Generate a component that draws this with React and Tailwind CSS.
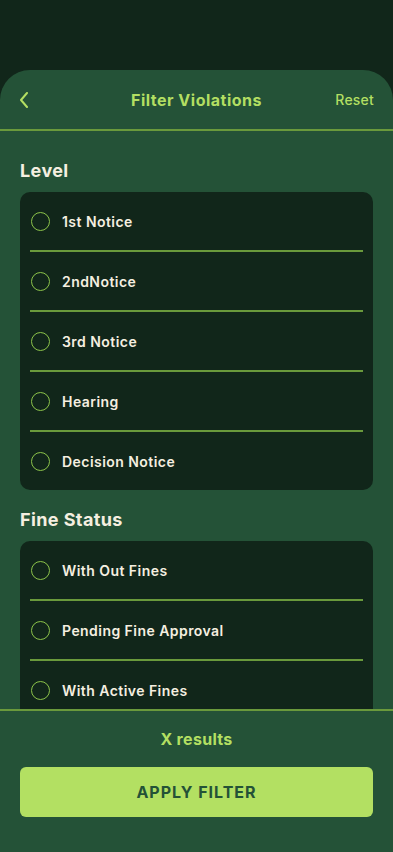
import { useState } from 'react';

const levels = ['1st Notice', '2ndNotice', '3rd Notice', 'Hearing', 'Decision Notice'];
const fineStatuses = ['With Out Fines', 'Pending Fine Approval', 'With Active Fines'];

function OptionCard({ options, selected, onToggle }) {
  return (
    <div className="rounded-[10px] bg-[#11261a]">
      {options.map((label, i) => (
        <div key={label}>
          {i > 0 && <div className="mx-[10px] h-[2px] bg-[#6a9a3c]" />}
          <button
            type="button"
            onClick={() => onToggle(label)}
            className="flex h-[58px] w-full items-center gap-[12px] px-[11px] text-left"
          >
            <span className="flex h-[19px] w-[19px] shrink-0 items-center justify-center rounded-full border border-[#8cc34a]">
              {selected.includes(label) && <span className="h-[11px] w-[11px] rounded-full bg-[#b3df62]" />}
            </span>
            <span className="text-[14px] font-semibold tracking-[0.45px] text-[#f5efe0]">{label}</span>
          </button>
        </div>
      ))}
    </div>
  );
}

export default function App() {
  const [selected, setSelected] = useState([]);

  const toggle = (label) =>
    setSelected((prev) => (prev.includes(label) ? prev.filter((l) => l !== label) : [...prev, label]));

  return (
    <div
      className="flex h-[852px] w-full flex-col overflow-hidden bg-[#11261a]"
      style={{ fontFamily: 'Inter, "Noto Sans", sans-serif' }}
    >
      <div className="h-[70px] shrink-0" />

      {/* Sheet */}
      <div className="flex min-h-0 flex-1 flex-col overflow-hidden rounded-t-[30px] bg-[#245237]">
        {/* Header */}
        <div className="relative flex h-[61px] shrink-0 items-center justify-between border-b-2 border-[#6a9a3c] px-[19px]">
          <button type="button" className="text-[#b3df62]">
            <svg width="10" height="16" viewBox="0 0 10 16" fill="none">
              <path d="M8 1L2 8l6 7" stroke="currentColor" strokeWidth="2" strokeLinecap="round" strokeLinejoin="round" />
            </svg>
          </button>
          <h1 className="absolute left-1/2 -translate-x-1/2 text-[16px] font-bold tracking-[0.5px] text-[#b3df62]">
            Filter Violations
          </h1>
          <button type="button" className="text-[14px] font-medium tracking-[0.2px] text-[#b3df62]">Reset</button>
        </div>

        {/* Content */}
        <div className="min-h-0 flex-1 overflow-hidden px-[20px] pt-[29px]">
          <h2 className="mb-[10px] text-[18px] font-bold leading-[22px] tracking-[0.4px] text-[#f5efe0]">Level</h2>
          <OptionCard options={levels} selected={selected} onToggle={toggle} />

          <h2 className="mb-[10px] mt-[19px] text-[18px] font-bold leading-[22px] tracking-[0.4px] text-[#f5efe0]">
            Fine Status
          </h2>
          <OptionCard options={fineStatuses} selected={selected} onToggle={toggle} />
        </div>

        {/* Footer */}
        <div className="h-[143px] shrink-0 border-t-2 border-[#6a9a3c] px-[20px] pt-[18px]">
          <p className="text-center text-[16px] font-bold leading-[20px] tracking-[0.3px] text-[#b3df62]">X results</p>
          <button
            type="button"
            className="mt-[18px] h-[50px] w-full rounded-[6px] bg-[#b3e062] text-[16px] font-bold tracking-[1px] text-[#245237]"
          >
            APPLY FILTER
          </button>
        </div>
      </div>
    </div>
  );
}
